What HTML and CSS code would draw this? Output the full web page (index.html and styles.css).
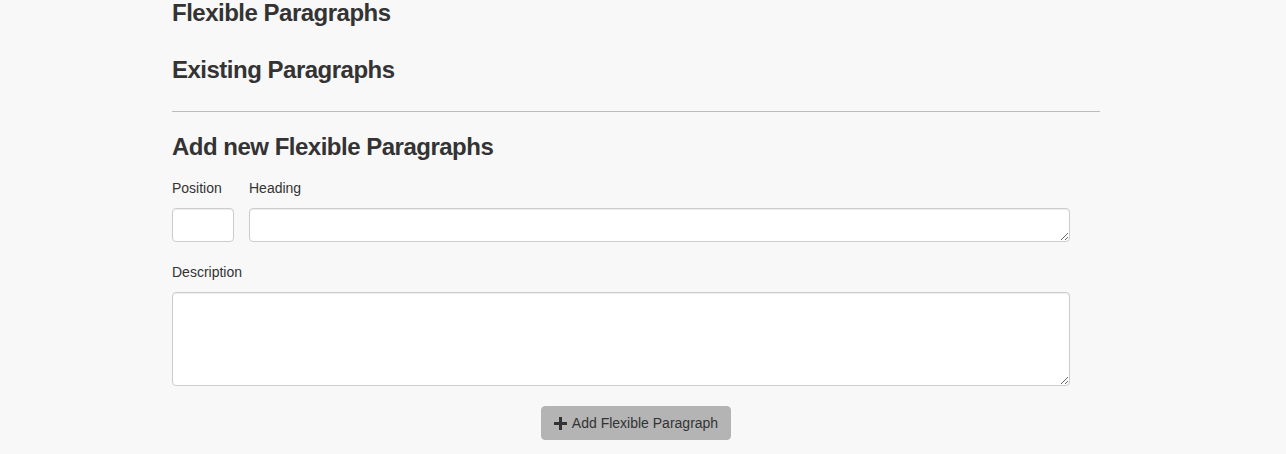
FILE: index.html
```html
<!DOCTYPE html>
<html lang="en">

<head>
  <title>Flexible Paragraphs</title>
  <meta charset="UTF-8">
  <meta name="viewport" content="width=device-width, initial-scale=1">
  <link rel="stylesheet" href="styles.css">
</head>

<body>
  <div class="container">
    <h3 class="title-first">Flexible Paragraphs</h3>

    <h3 class="title-existing">Existing Paragraphs</h3>

    <hr>

    <h3 class="title-add">Add new Flexible Paragraphs</h3>

    <form class="para-form">
      <div class="row">
        <div class="form-group position-group">
          <label for="position">Position</label>
          <input type="text" id="position" class="form-control">
        </div>
        <div class="form-group heading-group">
          <label for="heading">Heading</label>
          <textarea id="heading" class="form-control heading-input"></textarea>
        </div>
      </div>

      <div class="form-group">
        <label for="description">Description</label>
        <textarea id="description" class="form-control description-input"></textarea>
      </div>

      <div class="actions">
        <button type="button" class="btn">
          <svg class="icon-plus" width="13" height="13" viewBox="0 0 13 13">
            <path d="M5 0h3v5h5v3h-5v5h-3v-5h-5v-3h5z" fill="#333"/>
          </svg>
          Add Flexible Paragraph
        </button>
      </div>
    </form>
  </div>
</body>

</html>
```

FILE: styles.css
```css
* {
  box-sizing: border-box;
}

/* Page */
body {
  font-family: "Liberation Sans", Arial, Helvetica, sans-serif;
  font-size: 14px;
  color: #333;
  margin: 0;
  background-color: #f8f8f8;
}

.container {
  width: 928px;
  margin-left: 172px;
  padding-bottom: 14px;
}

/* Headings */
h3 {
  font-size: 24px;
  font-weight: bold;
  letter-spacing: -0.5px;
  line-height: 26px;
  margin: 0;
}

.title-existing {
  margin-top: 31px;
}

.title-add {
  margin-top: 22px;
}

hr {
  border: 0;
  border-top: 1px solid #bbb;
  margin: 28px 0 0;
}

/* Form */
.para-form {
  width: 898px;
  padding-top: 18px;
}

.row {
  display: flex;
  gap: 15px;
}

.form-group {
  margin-bottom: 20px;
}

.position-group {
  width: 62px;
}

.heading-group {
  flex: 1;
}

label {
  display: block;
  line-height: 20px;
  margin-bottom: 10px;
}

.form-control {
  display: block;
  width: 100%;
  height: 34px;
  padding: 6px 12px;
  font-family: inherit;
  font-size: 14px;
  color: #555;
  background-color: #fff;
  border: 1px solid #ccc;
  border-radius: 4px;
  box-shadow: inset 0 1px 1px rgba(0, 0, 0, .075);
  margin: 0;
}

.description-input {
  height: 94px;
}

/* Button */
.actions {
  display: flex;
  justify-content: center;
  width: 928px;
}

.btn {
  display: inline-flex;
  align-items: center;
  gap: 5px;
  height: 34px;
  padding: 0 12px;
  font-family: inherit;
  font-size: 14px;
  color: #333;
  background-color: #b4b4b4;
  border: 1px solid #b4b4b4;
  border-radius: 4px;
  cursor: pointer;
}
```
